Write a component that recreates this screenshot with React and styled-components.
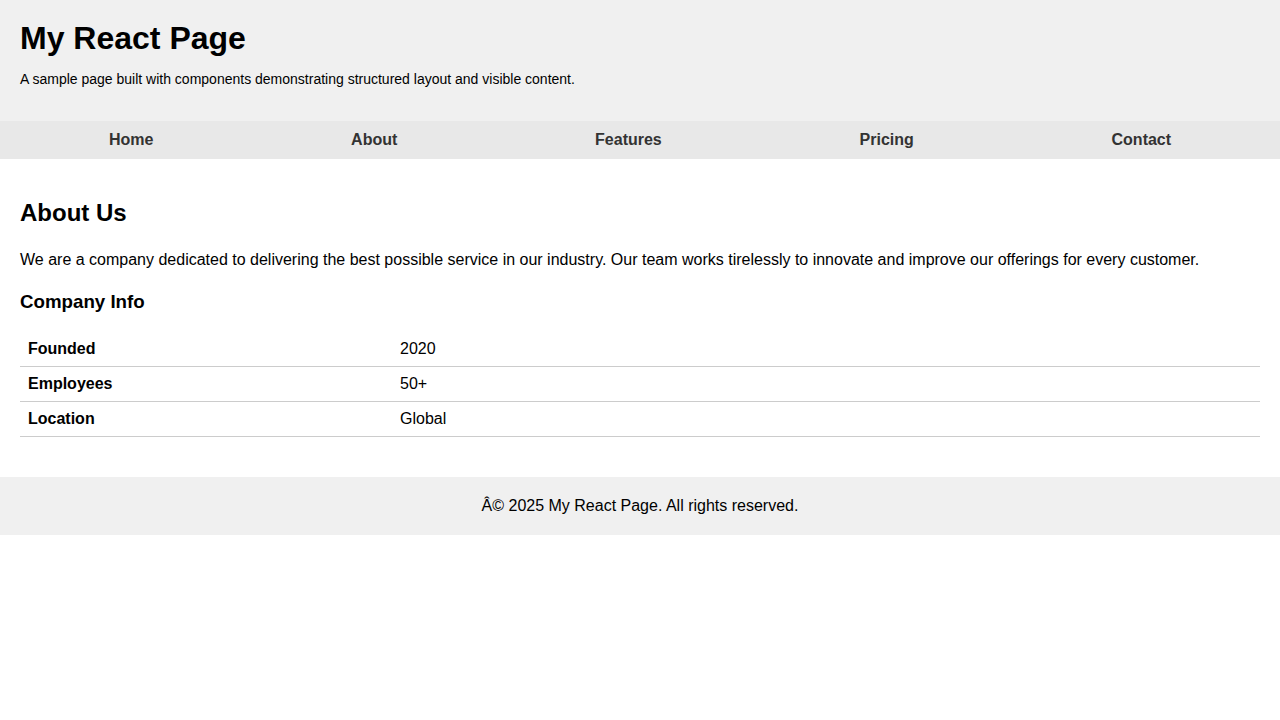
import React from 'react';
import styled, { createGlobalStyle } from 'styled-components';

const GlobalStyle = createGlobalStyle`
    body { margin:0; font-family:"Liberation Sans", Arial, sans-serif; color:#000; background:#fff; }
`

const Header = styled.header`
    background:#f0f0f0;
    padding:20px;
    h1 { margin:0; font-size:32px; }
    p { margin:14px 0; font-size:14px; }
`

const Nav = styled.nav`
    display:flex;
    justify-content:space-around;
    background:#e8e8e8;
    padding:0 10px;
    a { display:block; padding:10px 0; color:#333; font-weight:bold; text-decoration:none; font-size:16px; }
`

const Main = styled.main`
    padding:20px;
    h2 { font-size:24px; margin:20px 0; }
    p { font-size:16px; line-height:1.6; margin:16px 0; }
    h3 { font-size:18.72px; margin:18.72px 0; }
`

const InfoTable = styled.table`
    width:100%;
    border-collapse:collapse;
    margin:0 0 20px;
    td { padding:8px; border-bottom:1px solid #ccc; font-size:16px; }
    td:first-child { width:30%; font-weight:bold; }
`

const Footer = styled.footer`
    background:#f0f0f0;
    padding:20px;
    text-align:center;
    font-size:16px;
`

const links = ['Home', 'About', 'Features', 'Pricing', 'Contact']
const info = [
    { label:'Founded', value:'2020' },
    { label:'Employees', value:'50+' },
    { label:'Location', value:'Global' },
]

const App = () => {
    return (
        <>
            <GlobalStyle />
            <Header>
                <h1>My React Page</h1>
                <p>A sample page built with components demonstrating structured layout and visible content.</p>
            </Header>
            <Nav>
                {links.map((l) => <a key={l} href={`#${l.toLowerCase()}`}>{l}</a>)}
            </Nav>
            <Main>
                <h2>About Us</h2>
                <p>We are a company dedicated to delivering the best possible service in our industry. Our team works tirelessly to innovate and improve our offerings for every customer.</p>
                <h3>Company Info</h3>
                <InfoTable>
                    <tbody>
                        {info.map((row) => (
                            <tr key={row.label}>
                                <td>{row.label}</td>
                                <td>{row.value}</td>
                            </tr>
                        ))}
                    </tbody>
                </InfoTable>
            </Main>
            <Footer>Â© 2025 My React Page. All rights reserved.</Footer>
        </>
    );
};

export default App;
